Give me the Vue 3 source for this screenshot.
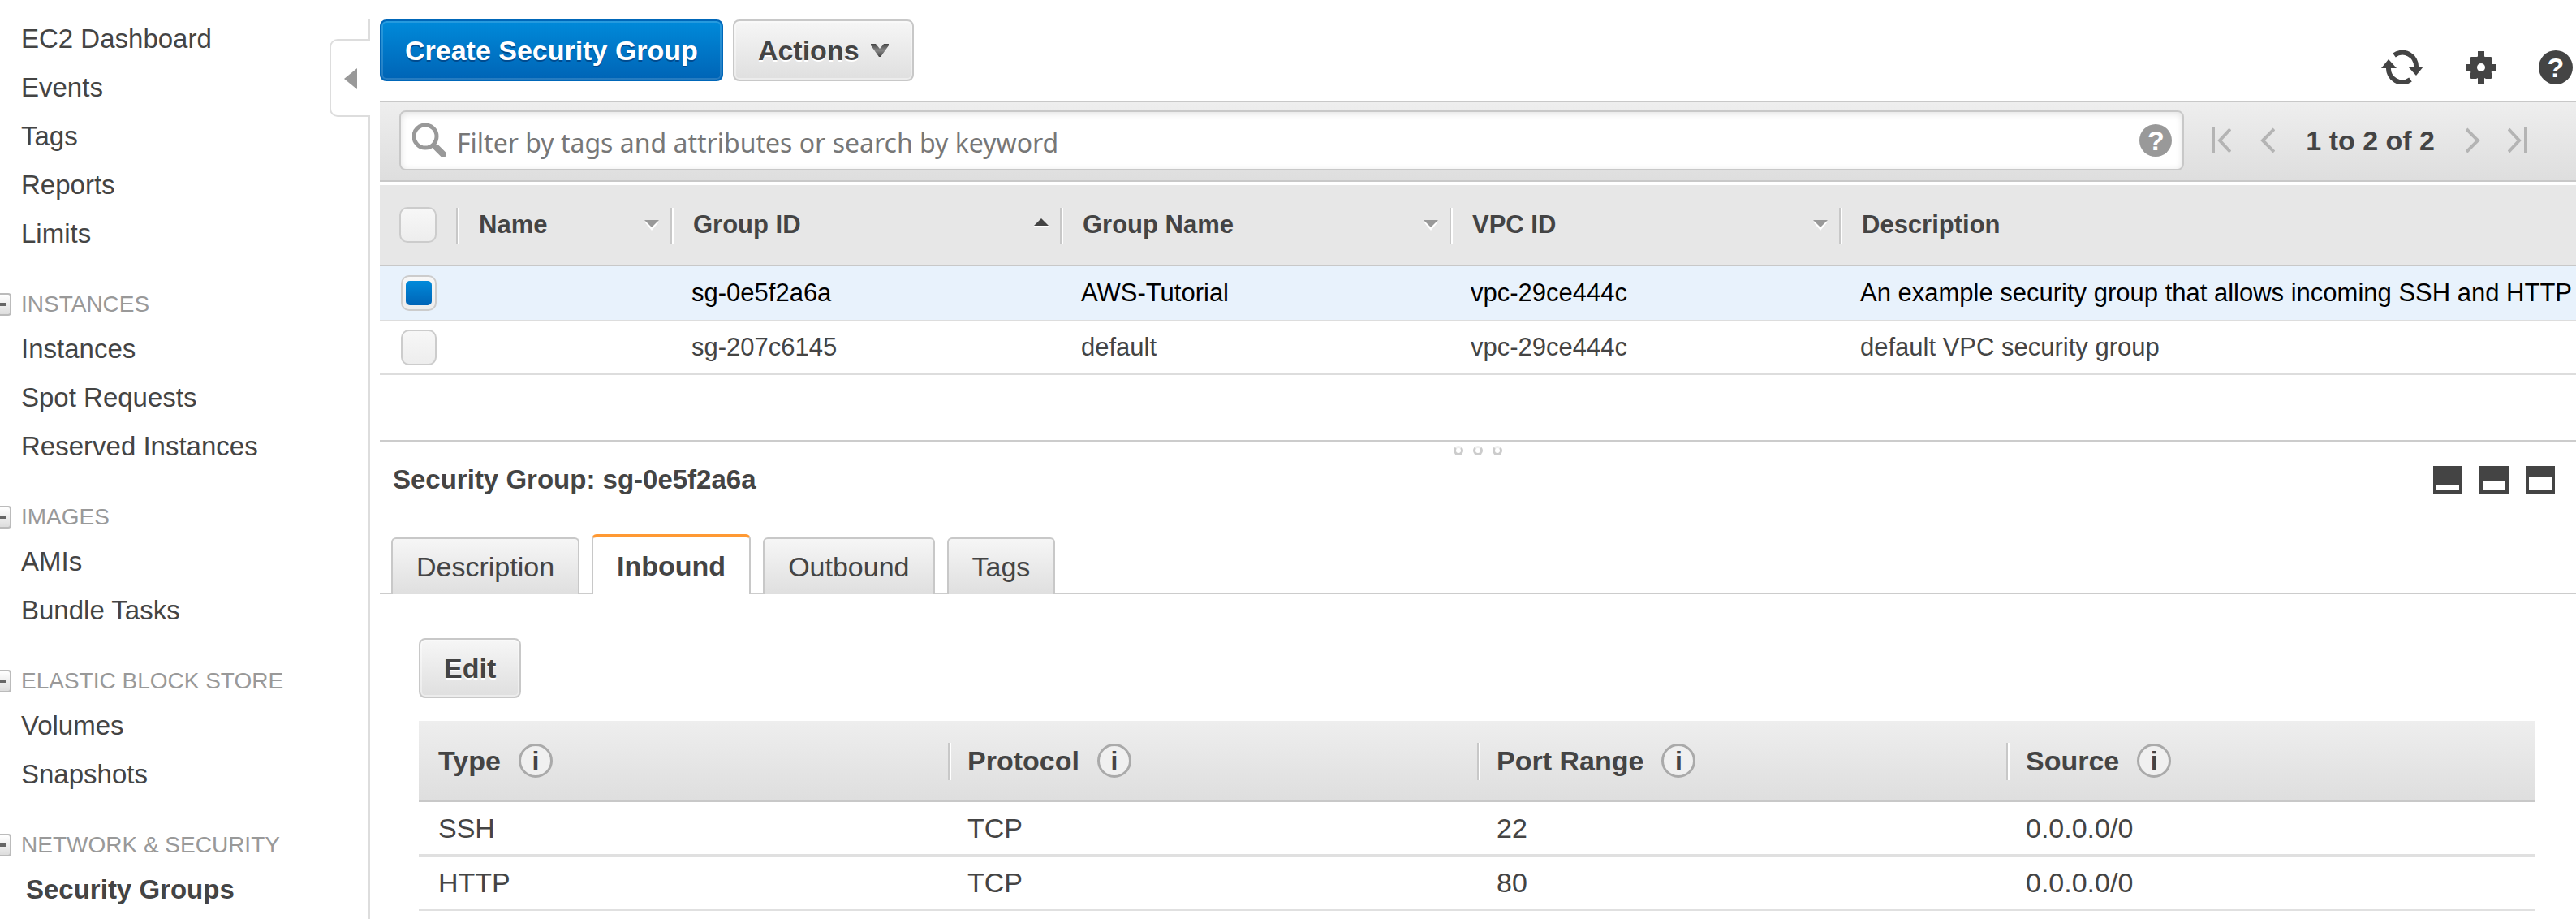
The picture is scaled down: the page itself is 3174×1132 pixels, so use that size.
<script setup>
import { ref } from 'vue'

const topLinks = ['EC2 Dashboard', 'Events', 'Tags', 'Reports', 'Limits']

const navGroups = [
  { title: 'INSTANCES', items: ['Instances', 'Spot Requests', 'Reserved Instances'] },
  { title: 'IMAGES', items: ['AMIs', 'Bundle Tasks'] },
  { title: 'ELASTIC BLOCK STORE', items: ['Volumes', 'Snapshots'] },
  { title: 'NETWORK & SECURITY', items: ['Security Groups'] },
]
const currentPage = 'Security Groups'

const columns = [
  { label: 'Name', sort: 'down' },
  { label: 'Group ID', sort: 'up' },
  { label: 'Group Name', sort: 'down' },
  { label: 'VPC ID', sort: 'down' },
  { label: 'Description', sort: '' },
]

const groups = ref([
  {
    selected: true,
    name: '',
    id: 'sg-0e5f2a6a',
    groupName: 'AWS-Tutorial',
    vpc: 'vpc-29ce444c',
    description: 'An example security group that allows incoming SSH and HTTP',
  },
  {
    selected: false,
    name: '',
    id: 'sg-207c6145',
    groupName: 'default',
    vpc: 'vpc-29ce444c',
    description: 'default VPC security group',
  },
])

const tabs = ['Description', 'Inbound', 'Outbound', 'Tags']
const activeTab = ref('Inbound')

const ruleColumns = ['Type', 'Protocol', 'Port Range', 'Source']
const rules = [
  ['SSH', 'TCP', '22', '0.0.0.0/0'],
  ['HTTP', 'TCP', '80', '0.0.0.0/0'],
]

const filter = ref('')
</script>

<template>
  <div class="console">
    <aside class="sidebar">
      <nav class="nav">
        <ul class="links">
          <li v-for="link in topLinks" :key="link"><a href="#">{{ link }}</a></li>
        </ul>
        <section v-for="group in navGroups" :key="group.title" class="group">
          <div class="group-head">
            <button class="toggle" type="button" :aria-label="'Collapse ' + group.title"></button>
            <h2>{{ group.title }}</h2>
          </div>
          <ul class="links">
            <li v-for="item in group.items" :key="item">
              <a href="#" :class="{ current: item === currentPage }">{{ item }}</a>
            </li>
          </ul>
        </section>
      </nav>
      <div class="rail">
        <div class="rail-top"></div>
        <button class="rail-tab" type="button" aria-label="Hide navigation">
          <svg width="16" height="26" viewBox="0 0 16 26"><path d="M16 0V26L0 13Z" fill="#999" /></svg>
        </button>
        <div class="rail-rest"></div>
      </div>
    </aside>

    <main class="main">
      <header class="actions">
        <button class="btn primary" type="button">Create Security Group</button>
        <button class="btn" type="button">
          Actions
          <svg width="22" height="16" viewBox="0 0 22 16">
            <defs>
              <linearGradient id="chev" x1="0" y1="0" x2="0" y2="1">
                <stop offset="0" stop-color="#444" />
                <stop offset="0.5" stop-color="#888" />
                <stop offset="1" stop-color="#444" />
              </linearGradient>
            </defs>
            <path d="M0 0H6L11 6L16 0H22V2L12 16H10L0 2Z" fill="url(#chev)" />
          </svg>
        </button>
        <div class="tools">
          <button class="icon" type="button" aria-label="Refresh">
            <svg width="52" height="42" viewBox="0 0 52 42" fill="none">
              <path d="M16 6A17 17 0 0 1 43 21" stroke="#444" stroke-width="6" />
              <path d="M33 20H52L43 31Z" fill="#444" />
              <path d="M36 36A17 17 0 0 1 9 21" stroke="#444" stroke-width="6" />
              <path d="M0 22H19L9 11Z" fill="#444" />
            </svg>
          </button>
          <button class="icon" type="button" aria-label="Settings">
            <svg width="36" height="40" viewBox="0 0 36 40">
              <g fill="#444">
                <rect x="14" y="0" width="8" height="40" />
                <rect x="0" y="16" width="36" height="8" />
                <rect x="5" y="7" width="8" height="8" rx="1" />
                <rect x="23" y="7" width="8" height="8" rx="1" />
                <rect x="5" y="26" width="8" height="8" rx="1" />
                <rect x="23" y="26" width="8" height="8" rx="1" />
                <circle cx="18" cy="20" r="14" />
              </g>
              <circle cx="18" cy="20" r="5" fill="#fff" />
            </svg>
          </button>
          <button class="icon help dark" type="button" aria-label="Help">?</button>
        </div>
      </header>

      <div class="filterbar">
        <div class="search">
          <svg width="42" height="42" viewBox="0 0 42 42" fill="none" stroke="#999">
            <circle cx="16" cy="16" r="14" stroke-width="5" />
            <path d="M26 26L30 30" stroke-width="5" />
            <path d="M30 30L38 38" stroke-width="8" stroke-linecap="round" />
          </svg>
          <input
            v-model="filter"
            type="text"
            aria-label="Filter security groups"
            placeholder="Filter by tags and attributes or search by keyword"
          />
          <button class="icon help" type="button" aria-label="Search help">?</button>
        </div>
        <div class="pager">
          <button class="icon" type="button" aria-label="First page">
            <svg width="24" height="32" viewBox="0 0 24 32" fill="none" stroke="#b4b4b4" stroke-width="4">
              <path d="M2 0V32M23 2L10 16L23 30" />
            </svg>
          </button>
          <button class="icon prev" type="button" aria-label="Previous page">
            <svg width="18" height="32" viewBox="0 0 18 32" fill="none" stroke="#b4b4b4" stroke-width="4">
              <path d="M17 2L3 16L17 30" />
            </svg>
          </button>
          <span class="range">1 to 2 of 2</span>
          <button class="icon next" type="button" aria-label="Next page">
            <svg width="18" height="32" viewBox="0 0 18 32" fill="none" stroke="#b4b4b4" stroke-width="4">
              <path d="M1 2L15 16L1 30" />
            </svg>
          </button>
          <button class="icon" type="button" aria-label="Last page">
            <svg width="24" height="32" viewBox="0 0 24 32" fill="none" stroke="#b4b4b4" stroke-width="4">
              <path d="M22 0V32M1 2L14 16L1 30" />
            </svg>
          </button>
        </div>
      </div>

      <table class="grid">
        <colgroup>
          <col class="c-check" />
          <col class="c-name" />
          <col class="c-wide" />
          <col class="c-wide" />
          <col class="c-wide" />
          <col />
        </colgroup>
        <thead>
          <tr>
            <th class="check"><input type="checkbox" aria-label="Select all groups" /></th>
            <th v-for="col in columns" :key="col.label" class="divided" scope="col">
              <div class="th-inner">
                <span>{{ col.label }}</span>
                <svg v-if="col.sort === 'down'" width="18" height="14" viewBox="0 0 18 14">
                  <path d="M0 3H18L9 14Z" fill="#fff" />
                  <path d="M0 1H18L9 10Z" fill="#999" />
                </svg>
                <svg v-else-if="col.sort === 'up'" width="18" height="18" viewBox="0 0 18 18">
                  <path d="M0 10H18V12H0Z" fill="#fff" />
                  <path d="M0 10H18L9 1Z" fill="#444" />
                </svg>
              </div>
            </th>
          </tr>
        </thead>
        <tbody>
          <tr v-for="g in groups" :key="g.id" :class="{ selected: g.selected }">
            <td class="check"><input v-model="g.selected" type="checkbox" :aria-label="'Select ' + g.id" /></td>
            <td>{{ g.name }}</td>
            <td>{{ g.id }}</td>
            <td>{{ g.groupName }}</td>
            <td>{{ g.vpc }}</td>
            <td>{{ g.description }}</td>
          </tr>
        </tbody>
      </table>

      <div class="splitter"><i></i><i></i><i></i></div>

      <section class="detail">
        <div class="detail-head">
          <h1>Security Group: sg-0e5f2a6a</h1>
          <div class="panes">
            <button class="icon" type="button" aria-label="Minimise details">
              <svg width="36" height="34" viewBox="0 0 36 34"><path fill="#444" d="M0 0H36V34H0Z" /><path fill="#fff" d="M4 24H32V29H4Z" /></svg>
            </button>
            <button class="icon" type="button" aria-label="Split view">
              <svg width="36" height="34" viewBox="0 0 36 34"><path fill="#444" d="M0 0H36V34H0Z" /><path fill="#fff" d="M4 19H32V29H4Z" /></svg>
            </button>
            <button class="icon" type="button" aria-label="Maximise details">
              <svg width="36" height="34" viewBox="0 0 36 34"><path fill="#444" d="M0 0H36V34H0Z" /><path fill="#fff" d="M4 14H32V29H4Z" /></svg>
            </button>
          </div>
        </div>

        <div class="tabs" role="tablist">
          <button
            v-for="tab in tabs"
            :key="tab"
            type="button"
            role="tab"
            class="tab"
            :class="{ active: tab === activeTab }"
            :aria-selected="tab === activeTab"
            @click="activeTab = tab"
          >{{ tab }}</button>
        </div>

        <div class="panel">
          <button class="btn edit" type="button">Edit</button>
          <table class="rules">
            <thead>
              <tr>
                <th v-for="col in ruleColumns" :key="col" scope="col">
                  <div class="rule-head">{{ col }}<span class="info">i</span></div>
                </th>
              </tr>
            </thead>
            <tbody>
              <tr v-for="rule in rules" :key="rule[0]">
                <td v-for="(cell, i) in rule" :key="i">{{ cell }}</td>
              </tr>
            </tbody>
          </table>
        </div>
      </section>
    </main>
  </div>
</template>

<style>
body {
  background: #fff;
  overflow: hidden;
}
</style>

<style scoped>
.console,
.console * {
  box-sizing: border-box;
}
.console {
  display: flex;
  min-height: 100vh;
  font-family: "Liberation Sans", Arial, Helvetica, sans-serif;
  font-size: 34px;
  color: #444;
}
button,
input {
  font: inherit;
  color: inherit;
  margin: 0;
}
button {
  padding: 0;
  border: 0;
  background: none;
}
svg {
  display: block;
  flex: none;
}
h1,
h2 {
  margin: 0;
}

/* Sidebar */
.sidebar {
  display: flex;
  flex: none;
  width: 456px;
}
.nav {
  flex: 1;
  padding-top: 18px;
  font-size: 33px;
  white-space: nowrap;
}
.links {
  list-style: none;
  margin: 0;
  padding: 0 0 0 26px;
  line-height: 60px;
}
.links a {
  color: inherit;
  text-decoration: none;
}
.links .current {
  padding-left: 6px;
  font-weight: bold;
}
.group {
  margin-top: 32px;
}
.group-head {
  display: flex;
  align-items: center;
  gap: 12px;
}
.group-head h2 {
  font-size: 28px;
  font-weight: normal;
  line-height: 50px;
  color: #999;
}
.toggle {
  display: flex;
  align-items: center;
  justify-content: center;
  width: 28px;
  height: 28px;
  margin-left: -14px;
  border: 2px solid #bbb;
  border-radius: 4px;
  background: linear-gradient(#fff, #ddd);
}
.toggle::before {
  content: "";
  width: 14px;
  height: 4px;
  background: #666;
}
.rail {
  display: flex;
  flex-direction: column;
  width: 50px;
}
.rail-top {
  height: 24px;
  margin-top: 24px;
  border-right: 2px solid #ddd;
}
.rail-tab {
  display: flex;
  align-items: center;
  height: 96px;
  padding: 2px 0 0 16px;
  border: 2px solid #ddd;
  border-right: 0;
  border-radius: 10px 0 0 10px;
}
.rail-rest {
  flex: 1;
  border-right: 2px solid #ddd;
}

/* Main column */
.main {
  flex: 1;
  min-width: 0;
  margin-left: 12px;
}
.actions {
  display: flex;
  align-items: flex-start;
  gap: 12px;
  height: 124px;
  padding: 24px 4px 0 0;
}
.btn {
  display: flex;
  align-items: center;
  gap: 14px;
  height: 76px;
  padding: 0 29px;
  border: 2px solid #c8c8c8;
  border-radius: 8px;
  background: linear-gradient(#f6f6f6, #dfdfdf);
  box-shadow: inset 0 0 0 2px rgba(255, 255, 255, 0.4);
  font-weight: bold;
  text-shadow: 0 2px 0 #fff;
}
.btn.primary {
  border-color: #0067b9;
  background: linear-gradient(#008ada, #0064b6);
  box-shadow: inset 0 0 0 2px rgba(255, 255, 255, 0.15);
  color: #fff;
  text-shadow: 0 2px 0 #004b8f;
}
.tools {
  display: flex;
  align-items: center;
  gap: 53px;
  margin: 38px 0 0 auto;
}
.icon {
  flex: none;
}
.help {
  width: 40px;
  height: 40px;
  border-radius: 50%;
  background: #999;
  color: #fff;
  font-size: 34px;
  font-weight: bold;
  line-height: 40px;
  text-align: center;
}
.help.dark {
  width: 42px;
  height: 42px;
  background: #444;
  line-height: 42px;
}

.filterbar {
  display: flex;
  align-items: center;
  gap: 34px;
  height: 100px;
  padding: 0 60px 2px 24px;
  border-top: 2px solid #c8c8c8;
  border-bottom: 2px solid #c8c8c8;
  background: linear-gradient(#eee, #dedede);
}
.search {
  display: flex;
  align-items: center;
  flex: 1;
  gap: 13px;
  height: 74px;
  padding: 0 13px 0 14px;
  border: 2px solid #c8c8c8;
  border-radius: 8px;
  background: #fff;
  box-shadow: inset 0 2px 8px rgba(0, 0, 0, 0.12);
}
.search input {
  flex: 1;
  min-width: 0;
  height: 60px;
  padding: 4px 0 0;
  border: 0;
  outline: 0;
  background: none;
  font-family: "Noto Sans", "Open Sans", sans-serif;
  font-size: 32px;
}
.search input::placeholder {
  color: #777;
  opacity: 1;
}
.pager {
  display: flex;
  align-items: center;
}
.prev {
  margin: 0 38px 0 36px;
}
.next {
  margin: 0 34px 0 38px;
}
.range {
  font-weight: bold;
  line-height: 40px;
}

/* Security group list */
.grid {
  width: 100%;
  margin-top: 4px;
  table-layout: fixed;
  border-collapse: collapse;
  font-size: 31px;
  white-space: nowrap;
}
.c-check {
  width: 94px;
}
.c-name {
  width: 264px;
}
.c-wide {
  width: 480px;
}
.grid th,
.grid td {
  padding: 0 0 2px 26px;
  text-align: left;
  overflow: hidden;
}
.grid th {
  padding-left: 28px;
}
.grid thead tr {
  height: 100px;
  background: #e7e7e7;
  box-shadow: inset 0 -2px 0 #c8c8c8;
}
.grid tbody tr {
  height: 68px;
  box-shadow: inset 0 -2px 0 #ddd;
}
.grid tbody tr + tr {
  height: 66px;
}
.grid tbody .selected {
  background: #e8f2fc;
  color: #000;
}
.divided {
  background:
    linear-gradient(#c8c8c8, #c8c8c8) 0 50% / 2px 44px no-repeat,
    linear-gradient(#fff, #fff) 2px 50% / 2px 44px no-repeat;
}
.th-inner {
  display: flex;
  align-items: center;
  justify-content: space-between;
  padding-right: 14px;
}
.check input {
  display: flex;
  align-items: center;
  justify-content: center;
  appearance: none;
  width: 44px;
  height: 44px;
  border: 2px solid #ccc;
  border-radius: 10px;
  background: linear-gradient(#f7f7f7, #ededed);
}
.grid th.check {
  padding-left: 24px;
}
.grid th.check input {
  width: 46px;
}
.check input:checked::before {
  content: "";
  width: 32px;
  height: 30px;
  border-radius: 5px;
  background: linear-gradient(#008ada, #0064b6);
}

/* Splitter */
.splitter {
  display: flex;
  justify-content: center;
  gap: 12px;
  height: 24px;
  margin-top: 80px;
  padding-top: 5px;
  border-top: 2px solid #ccc;
}
.splitter i {
  width: 12px;
  height: 12px;
  border: 3px solid #ccc;
  border-top-color: #eee;
  border-radius: 50%;
}

/* Detail pane */
.detail-head {
  display: flex;
  align-items: center;
  justify-content: space-between;
  height: 50px;
  padding: 0 26px 0 16px;
}
.detail-head h1 {
  font-size: 33px;
  line-height: 50px;
}
.panes {
  display: flex;
  gap: 21px;
}
.tabs {
  display: flex;
  align-items: flex-end;
  gap: 15px;
  height: 74px;
  margin-top: 42px;
  padding-left: 14px;
  background: linear-gradient(#ccc, #ccc) 0 100% / 100% 2px no-repeat;
}
.tab {
  height: 70px;
  padding: 0 29px;
  border: 2px solid #c8c8c8;
  border-bottom: 0;
  border-radius: 6px 6px 0 0;
  background: linear-gradient(#f6f6f6, #dfdfdf);
}
.tab.active {
  height: 74px;
  border-top: 4px solid #ff9933;
  background: #fff;
  font-weight: bold;
}
.panel {
  padding: 54px 50px 0 48px;
}
.edit {
  height: 74px;
}
.rules {
  width: 100%;
  margin-top: 28px;
  table-layout: fixed;
  border-collapse: collapse;
}
.rules th,
.rules td {
  padding: 0 0 2px 24px;
  text-align: left;
}
.rules thead tr {
  height: 100px;
  background: linear-gradient(#eee, #dedede);
  box-shadow: inset 0 -2px 0 #c8c8c8;
}
.rules th + th {
  background:
    linear-gradient(#c8c8c8, #c8c8c8) 0 50% / 2px 46px no-repeat,
    linear-gradient(#fff, #fff) 2px 50% / 2px 46px no-repeat;
}
.rules tbody tr {
  height: 68px;
  box-shadow: inset 0 -4px 0 #e0e0e0;
}
.rules tbody td {
  padding-bottom: 4px;
}
.rules tbody tr:last-child {
  height: 66px;
  box-shadow: inset 0 -2px 0 #e0e0e0;
}
.rule-head {
  display: flex;
  align-items: center;
  gap: 22px;
}
.info {
  width: 42px;
  height: 42px;
  border: 3px solid #aaa;
  border-radius: 50%;
  background: #f0f0f0;
  font-size: 32px;
  line-height: 36px;
  text-align: center;
}
</style>
